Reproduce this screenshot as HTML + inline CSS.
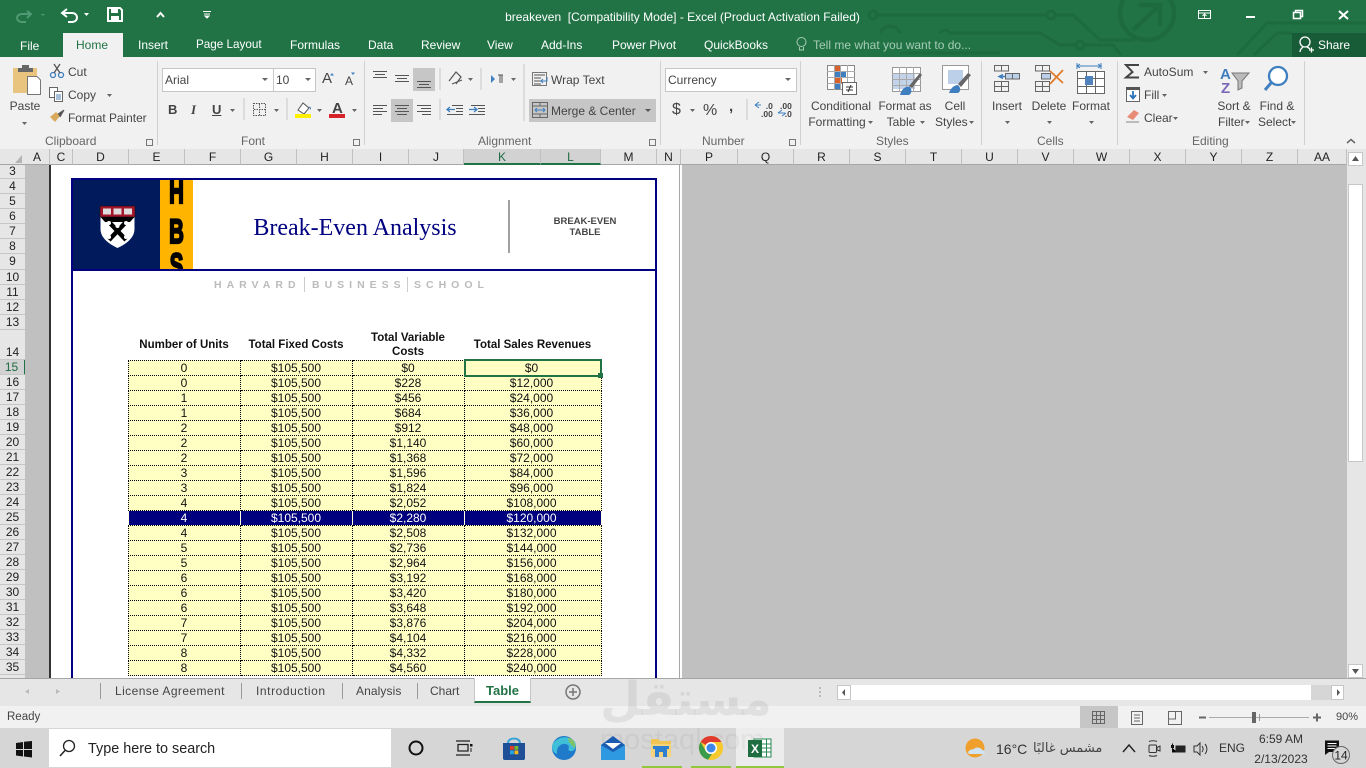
<!DOCTYPE html>
<html><head><meta charset="utf-8"><title>breakeven - Excel</title>
<style>
html,body{margin:0;padding:0;width:1366px;height:768px;overflow:hidden;background:#fff}
body{position:relative;font-family:"Liberation Sans","DejaVu Sans",sans-serif;font-size:12px;color:#444}
.a{position:absolute}
.t{position:absolute;white-space:pre;line-height:14px}
.c{text-align:center}
.w{color:#fff}
.g{color:#666}
.ch{position:absolute;top:149px;line-height:16px;text-align:center;color:#222;background:#e6e6e6;border-right:1px solid #c0c0c0;box-sizing:border-box;border-bottom:1px solid #a6a6a6;height:16px}
.rh{position:absolute;left:0;width:25px;text-align:center;color:#222;background:#e6e6e6;border-bottom:1px solid #c6c6c6;box-sizing:border-box;font-size:12px}
table{position:absolute;left:128px;top:360px;width:473px;border-collapse:collapse;table-layout:fixed;font-size:12px;color:#111;background:#ffffc4}
td{height:14px;padding:0 1px 0 0;border:1px dotted #000;text-align:center;line-height:14px;overflow:hidden}
td:last-child{padding-right:3px}
tr.s td{background:#00007f;color:#fff;border-left-color:#fff;border-right-color:#fff}
.hd{position:absolute;font-weight:bold;font-size:11.500px;color:#111;text-align:center;line-height:14px}
svg{position:absolute;left:0;top:0}
</style></head><body>

<!-- title bar + tabs -->
<div class="a" style="left:0;top:0;width:1366px;height:57px;background:#217346"></div>
<svg width="1366" height="57" style="left:0;top:0">
<g fill="none" stroke="#1d6a3f" stroke-width="3">
<circle cx="1147" cy="13" r="27" stroke-width="4.500"/>
<path d="M1133 30L1159 6M1139 5H1160V26" stroke-width="4.500"/>
<path d="M876 15H1047M1055 15H1073L1100 40H1135"/>
<circle cx="1051" cy="15" r="4"/>
<circle cx="873" cy="15" r="4"/>
<path d="M973 33H1040L1060 45H1076M1084 45H1113L1121 55"/>
<circle cx="1080" cy="45" r="4"/>
<path d="M880 33C884 24 896 24 900 33M940 33C943 29 947 29 950 33M950 33H973"/>
<path d="M1237 55L1267 23H1366M1254 55L1277 33H1292"/>
<path d="M900 53H1000"/>
</g></svg>
<div class="a" style="left:63px;top:33px;width:60px;height:24px;background:#f1f1f1"></div>
<div class="a" style="left:1292px;top:33px;width:74px;height:24px;background:#185c37"></div>
<div class="t w c" style="left:400px;top:10px;width:565px">breakeven  [Compatibility Mode] - Excel (Product Activation Failed)</div>
<div class="t w" style="left:20px;top:39px">File</div>
<div class="t" style="left:76px;top:38px;color:#217346">Home</div>
<div class="t w" style="left:138px;top:38px">Insert</div>
<div class="t w" style="left:196px;top:38px;font-size:11.700px">Page Layout</div>
<div class="t w" style="left:290px;top:38px">Formulas</div>
<div class="t w" style="left:368px;top:38px">Data</div>
<div class="t w" style="left:421px;top:38px">Review</div>
<div class="t w" style="left:487px;top:38px">View</div>
<div class="t w" style="left:541px;top:38px">Add-Ins</div>
<div class="t w" style="left:612px;top:38px">Power Pivot</div>
<div class="t w" style="left:704px;top:38px">QuickBooks</div>
<div class="t" style="left:813px;top:38px;color:#a6cbb5">Tell me what you want to do...</div>
<div class="t w" style="left:1318px;top:38px">Share</div>

<!-- ribbon -->
<div class="a" style="left:0;top:57px;width:1366px;height:92px;background:#f1f1f1"></div>
<div class="a" style="left:157px;top:61px;width:1px;height:84px;background:#d0d0d0"></div>
<div class="a" style="left:364px;top:61px;width:1px;height:84px;background:#d0d0d0"></div>
<div class="a" style="left:660px;top:61px;width:1px;height:84px;background:#d0d0d0"></div>
<div class="a" style="left:800px;top:61px;width:1px;height:84px;background:#d0d0d0"></div>
<div class="a" style="left:981px;top:61px;width:1px;height:84px;background:#d0d0d0"></div>
<div class="a" style="left:1117px;top:61px;width:1px;height:84px;background:#d0d0d0"></div>
<div class="a" style="left:1304px;top:61px;width:1px;height:84px;background:#d0d0d0"></div>
<div class="a" style="left:162px;top:68px;width:110px;height:22px;background:#fff;border:1px solid #c6c6c6"></div>
<div class="a" style="left:273px;top:68px;width:41px;height:22px;background:#fff;border:1px solid #c6c6c6"></div>
<div class="a" style="left:665px;top:68px;width:130px;height:22px;background:#fff;border:1px solid #c6c6c6"></div>
<div class="a" style="left:413px;top:68px;width:22px;height:23px;background:#c6c6c6"></div>
<div class="a" style="left:391px;top:99px;width:22px;height:23px;background:#c6c6c6"></div>
<div class="a" style="left:529px;top:99px;width:127px;height:23px;background:#c6c6c6"></div>

<div class="t" style="left:68px;top:65px">Cut</div>
<div class="t" style="left:68px;top:88px">Copy</div>
<div class="t" style="left:68px;top:111px;font-size:11.900px">Format Painter</div>
<div class="t c" style="left:5px;top:99px;width:40px">Paste</div>
<div class="t g" style="left:45px;top:134px">Clipboard</div>
<div class="t" style="left:165px;top:73px">Arial</div>
<div class="t" style="left:276px;top:73px">10</div>
<div class="t g" style="left:241px;top:134px">Font</div>
<div class="t" style="left:551px;top:73px">Wrap Text</div>
<div class="t" style="left:551px;top:104px">Merge &amp; Center</div>
<div class="t g" style="left:478px;top:134px">Alignment</div>
<div class="t" style="left:668px;top:73px">Currency</div>
<div class="t" style="left:672px;top:103px;font-size:16px">$</div>
<div class="t" style="left:703px;top:104px;font-size:16px">%</div>
<div class="t" style="left:729px;top:100px;font-size:15px;font-weight:bold">,</div>
<div class="t" style="left:761px;top:102px;font-size:8.500px;line-height:8px;font-weight:bold">  .0<br>.00</div>
<div class="t" style="left:780px;top:102px;font-size:8.500px;line-height:8px;font-weight:bold">.00<br>  .0</div>
<div class="t g" style="left:702px;top:134px">Number</div>
<div class="t c" style="left:805px;top:99px;width:72px">Conditional</div>
<div class="t c" style="left:805px;top:115px;width:64px">Formatting</div>
<div class="t c" style="left:875px;top:99px;width:60px;font-size:11.800px">Format as</div>
<div class="t c" style="left:875px;top:115px;width:52px">Table</div>
<div class="t c" style="left:935px;top:99px;width:40px">Cell</div>
<div class="t c" style="left:935px;top:115px;width:32px">Styles</div>
<div class="t g" style="left:876px;top:134px">Styles</div>
<div class="t c" style="left:986px;top:99px;width:42px">Insert</div>
<div class="t c" style="left:1028px;top:99px;width:42px">Delete</div>
<div class="t c" style="left:1070px;top:99px;width:42px">Format</div>
<div class="t g" style="left:1037px;top:134px">Cells</div>
<div class="t" style="left:1144px;top:65px">AutoSum</div>
<div class="t" style="left:1144px;top:88px">Fill</div>
<div class="t" style="left:1144px;top:111px">Clear</div>
<div class="t c" style="left:1214px;top:99px;width:40px">Sort &amp;</div>
<div class="t" style="left:1218px;top:115px">Filter</div>
<div class="t c" style="left:1256px;top:99px;width:42px">Find &amp;</div>
<div class="t" style="left:1258px;top:115px">Select</div>
<div class="t g" style="left:1192px;top:134px">Editing</div>
<div class="t" style="left:322px;top:72px;font-size:15px">A</div>
<div class="t" style="left:345px;top:74px;font-size:12px">A</div>
<div class="t" style="left:168px;top:103px;font-weight:bold;font-size:13px">B</div>
<div class="t" style="left:191px;top:103px;font-style:italic;font-size:13px;font-family:'Liberation Serif',serif;font-weight:bold">I</div>
<div class="t" style="left:212px;top:103px;font-size:13px;font-weight:bold;text-decoration:underline">U</div>
<div class="t" style="left:332px;top:102px;font-size:15px;font-weight:bold">A</div>

<!-- column headers -->
<div class="a" style="left:0;top:149px;width:1347px;height:16px;background:#e6e6e6;border-bottom:1px solid #a6a6a6;box-sizing:border-box"></div>
<div class="ch" style="left:25px;width:25px">A</div>
<div class="ch" style="left:50px;width:23px">C</div>
<div class="ch" style="left:73px;width:56px">D</div>
<div class="ch" style="left:129px;width:56px">E</div>
<div class="ch" style="left:185px;width:56px">F</div>
<div class="ch" style="left:241px;width:56px">G</div>
<div class="ch" style="left:297px;width:56px">H</div>
<div class="ch" style="left:353px;width:56px">I</div>
<div class="ch" style="left:409px;width:55px">J</div>
<div class="ch" style="left:464px;width:77px;background:#d2d2d2;color:#1e6b41;border-bottom:2px solid #217346">K</div>
<div class="ch" style="left:541px;width:60px;background:#d2d2d2;color:#1e6b41;border-bottom:2px solid #217346">L</div>
<div class="ch" style="left:601px;width:56px">M</div>
<div class="ch" style="left:657px;width:24px">N</div>
<div class="ch" style="left:681px;width:57px">P</div>
<div class="ch" style="left:738px;width:56px">Q</div>
<div class="ch" style="left:794px;width:56px">R</div>
<div class="ch" style="left:850px;width:56px">S</div>
<div class="ch" style="left:906px;width:56px">T</div>
<div class="ch" style="left:962px;width:56px">U</div>
<div class="ch" style="left:1018px;width:56px">V</div>
<div class="ch" style="left:1074px;width:56px">W</div>
<div class="ch" style="left:1130px;width:56px">X</div>
<div class="ch" style="left:1186px;width:56px">Y</div>
<div class="ch" style="left:1242px;width:56px">Z</div>
<div class="ch" style="left:1298px;width:49px">AA</div>

<!-- row headers -->
<div class="rh" style="top:165px;height:14px;line-height:13px">3</div>
<div class="rh" style="top:179px;height:15px;line-height:15px">4</div>
<div class="rh" style="top:194px;height:15px;line-height:15px">5</div>
<div class="rh" style="top:209px;height:15px;line-height:15px">6</div>
<div class="rh" style="top:224px;height:15px;line-height:15px">7</div>
<div class="rh" style="top:239px;height:15px;line-height:15px">8</div>
<div class="rh" style="top:254px;height:16px;line-height:15px">9</div>
<div class="rh" style="top:270px;height:15px;line-height:15px">10</div>
<div class="rh" style="top:285px;height:15px;line-height:15px">11</div>
<div class="rh" style="top:300px;height:15px;line-height:15px">12</div>
<div class="rh" style="top:315px;height:15px;line-height:15px">13</div>
<div class="rh" style="top:330px;height:30px;line-height:44px">14</div>
<div class="rh" style="top:360px;height:15px;line-height:15px;width:26px;padding-right:1px;background:#d2d2d2;color:#1e6b41;border-right:2px solid #217346">15</div>
<div class="rh" style="top:375px;height:15px;line-height:15px">16</div>
<div class="rh" style="top:390px;height:15px;line-height:15px">17</div>
<div class="rh" style="top:405px;height:15px;line-height:15px">18</div>
<div class="rh" style="top:420px;height:15px;line-height:15px">19</div>
<div class="rh" style="top:435px;height:15px;line-height:15px">20</div>
<div class="rh" style="top:450px;height:15px;line-height:15px">21</div>
<div class="rh" style="top:465px;height:15px;line-height:15px">22</div>
<div class="rh" style="top:480px;height:15px;line-height:15px">23</div>
<div class="rh" style="top:495px;height:15px;line-height:15px">24</div>
<div class="rh" style="top:510px;height:15px;line-height:15px">25</div>
<div class="rh" style="top:525px;height:15px;line-height:15px">26</div>
<div class="rh" style="top:540px;height:15px;line-height:15px">27</div>
<div class="rh" style="top:555px;height:15px;line-height:15px">28</div>
<div class="rh" style="top:570px;height:15px;line-height:15px">29</div>
<div class="rh" style="top:585px;height:15px;line-height:15px">30</div>
<div class="rh" style="top:600px;height:15px;line-height:15px">31</div>
<div class="rh" style="top:615px;height:15px;line-height:15px">32</div>
<div class="rh" style="top:630px;height:15px;line-height:15px">33</div>
<div class="rh" style="top:645px;height:15px;line-height:15px">34</div>
<div class="rh" style="top:660px;height:15px;line-height:15px">35</div>
<div class="a" style="left:0;top:675px;width:25px;height:3px;background:#e6e6e6"></div>

<!-- sheet -->
<div class="a" style="left:25px;top:165px;width:25px;height:513px;background:#c0c0c0"></div>
<div class="a" style="left:49px;top:165px;width:2px;height:513px;background:#333"></div>
<div class="a" style="left:25px;top:360px;width:1px;height:0"></div>
<div class="a" style="left:679px;top:165px;width:1px;height:513px;background:#a6a6a6"></div>
<div class="a" style="left:682px;top:165px;width:665px;height:513px;background:#c0c0c0"></div>

<div class="a" style="left:71px;top:178px;width:582px;height:500px;border:2px solid #000080;border-bottom:0"></div>
<div class="a" style="left:73px;top:269px;width:582px;height:2px;background:#000080"></div>
<div class="a" style="left:73px;top:180px;width:87px;height:89px;background:#001a5c"></div>
<div class="a" style="left:160px;top:180px;width:33px;height:89px;background:#ffb400"></div>
<div class="a" style="left:508px;top:200px;width:2px;height:53px;background:#a0a0a0"></div>

<svg width="1366" height="768">
<defs><clipPath id="hb"><rect x="160" y="180" width="33" height="89"/></clipPath></defs>
<g clip-path="url(#hb)" font-family="Liberation Sans" font-weight="bold" font-size="34" fill="#000" stroke="#000" stroke-width="2.200" text-anchor="middle">
<text transform="translate(176.500 203) scale(.6 1)">H</text>
<text transform="translate(176.500 243) scale(.6 1)">B</text>
<text transform="translate(176.500 277) scale(.6 1)">S</text>
</g>
<!-- shield -->
<rect x="100" y="206" width="35" height="11" fill="#a3162b" stroke="#111" stroke-width=".6"/>
<rect x="103" y="208.500" width="8" height="6" fill="#ddd"/><rect x="113.500" y="208.500" width="8" height="6" fill="#ddd"/><rect x="124" y="208.500" width="8" height="6" fill="#ddd"/>
<path d="M100.500 217H134.500V229C134.500 238 126 244 117.500 248C109 244 100.500 238 100.500 229Z" fill="#fff"/>
<path d="M100.500 217H134.500L130 222H105Z" fill="#000"/>
<path d="M109 222L126 240M126 222L109 240" stroke="#000" stroke-width="4.500" fill="none"/>
<g fill="#fff"><circle cx="109" cy="223" r="2"/><circle cx="126" cy="223" r="2"/><circle cx="117.500" cy="226" r="2"/><circle cx="109" cy="237" r="2"/><circle cx="126" cy="237" r="2"/><circle cx="117.500" cy="238" r="2"/></g>
</svg>

<div class="t c" style="left:190px;top:212px;width:330px;font-family:'Liberation Serif',serif;font-size:24px;line-height:32px;color:#000080">Break-Even Analysis</div>
<div class="hd" style="left:530px;top:216px;width:110px;font-size:9.500px;line-height:11px;color:#444">BREAK-EVEN<br>TABLE</div>
<div class="t" style="left:214px;top:278px;font-size:10.500px;font-weight:bold;color:#bbb;letter-spacing:5px">HARVARD</div>
<div class="a" style="left:304px;top:277px;width:1px;height:15px;background:#ccc"></div>
<div class="t" style="left:312px;top:278px;font-size:10.500px;font-weight:bold;color:#bbb;letter-spacing:5px">BUSINESS</div>
<div class="a" style="left:407px;top:277px;width:1px;height:15px;background:#ccc"></div>
<div class="t" style="left:414px;top:278px;font-size:10.500px;font-weight:bold;color:#bbb;letter-spacing:5px">SCHOOL</div>

<div class="hd" style="left:128px;top:338px;width:112px">Number of Units</div>
<div class="hd" style="left:240px;top:338px;width:112px">Total Fixed Costs</div>
<div class="hd" style="left:352px;top:331px;width:112px">Total Variable<br>Costs</div>
<div class="hd" style="left:464px;top:338px;width:137px">Total Sales Revenues</div>

<table><colgroup><col style="width:112px"><col style="width:112px"><col style="width:112px"><col style="width:137px"></colgroup>
<tr><td>0</td><td>$105,500</td><td>$0</td><td>$0</td></tr>
<tr><td>0</td><td>$105,500</td><td>$228</td><td>$12,000</td></tr>
<tr><td>1</td><td>$105,500</td><td>$456</td><td>$24,000</td></tr>
<tr><td>1</td><td>$105,500</td><td>$684</td><td>$36,000</td></tr>
<tr><td>2</td><td>$105,500</td><td>$912</td><td>$48,000</td></tr>
<tr><td>2</td><td>$105,500</td><td>$1,140</td><td>$60,000</td></tr>
<tr><td>2</td><td>$105,500</td><td>$1,368</td><td>$72,000</td></tr>
<tr><td>3</td><td>$105,500</td><td>$1,596</td><td>$84,000</td></tr>
<tr><td>3</td><td>$105,500</td><td>$1,824</td><td>$96,000</td></tr>
<tr><td>4</td><td>$105,500</td><td>$2,052</td><td>$108,000</td></tr>
<tr class="s"><td>4</td><td>$105,500</td><td>$2,280</td><td>$120,000</td></tr>
<tr><td>4</td><td>$105,500</td><td>$2,508</td><td>$132,000</td></tr>
<tr><td>5</td><td>$105,500</td><td>$2,736</td><td>$144,000</td></tr>
<tr><td>5</td><td>$105,500</td><td>$2,964</td><td>$156,000</td></tr>
<tr><td>6</td><td>$105,500</td><td>$3,192</td><td>$168,000</td></tr>
<tr><td>6</td><td>$105,500</td><td>$3,420</td><td>$180,000</td></tr>
<tr><td>6</td><td>$105,500</td><td>$3,648</td><td>$192,000</td></tr>
<tr><td>7</td><td>$105,500</td><td>$3,876</td><td>$204,000</td></tr>
<tr><td>7</td><td>$105,500</td><td>$4,104</td><td>$216,000</td></tr>
<tr><td>8</td><td>$105,500</td><td>$4,332</td><td>$228,000</td></tr>
<tr><td>8</td><td>$105,500</td><td>$4,560</td><td>$240,000</td></tr>
</table>
<div class="a" style="left:464px;top:359px;width:134px;height:14px;border:2px solid #217346"></div>
<div class="a" style="left:598px;top:373px;width:5px;height:5px;background:#217346;border:0"></div>

<!-- vertical scrollbar -->
<div class="a" style="left:1347px;top:149px;width:19px;height:529px;background:#e6e6e6"></div>
<div class="a" style="left:1348px;top:152px;width:15px;height:14px;background:#fff;border:1px solid #c6c6c6;box-sizing:border-box"></div>
<div class="a" style="left:1348px;top:184px;width:15px;height:278px;background:#fff;border:1px solid #c6c6c6;box-sizing:border-box"></div>
<div class="a" style="left:1348px;top:664px;width:15px;height:14px;background:#fff;border:1px solid #c6c6c6;box-sizing:border-box"></div>

<!-- tab bar -->
<div class="a" style="left:0;top:678px;width:1366px;height:27px;background:#e6e6e6;border-top:1px solid #a6a6a6;border-bottom:1px solid #c6c6c6"></div>
<div class="a" style="left:474px;top:678px;width:57px;height:25px;background:#fff;border-bottom:2px solid #217346;border-left:1px solid #c6c6c6;border-right:1px solid #c6c6c6;box-sizing:border-box"></div>
<div class="a" style="left:100px;top:683px;width:1px;height:16px;background:#9a9a9a"></div>
<div class="a" style="left:241px;top:683px;width:1px;height:16px;background:#9a9a9a"></div>
<div class="a" style="left:342px;top:683px;width:1px;height:16px;background:#9a9a9a"></div>
<div class="a" style="left:417px;top:683px;width:1px;height:16px;background:#9a9a9a"></div>
<div class="t" style="left:115px;top:684px;letter-spacing:.42px">License Agreement</div>
<div class="t" style="left:256px;top:684px;letter-spacing:.58px">Introduction</div>
<div class="t" style="left:356px;top:684px;letter-spacing:.1px">Analysis</div>
<div class="t" style="left:430px;top:684px">Chart</div>
<div class="t" style="left:486px;top:684px;font-weight:bold;font-size:13px;color:#217346">Table</div>
<div class="a" style="left:837px;top:685px;width:507px;height:15px;background:#d6d6d6"></div>
<div class="a" style="left:837px;top:685px;width:14px;height:15px;background:#fff;border:1px solid #c6c6c6;box-sizing:border-box"></div>
<div class="a" style="left:851px;top:685px;width:460px;height:15px;background:#fff"></div>
<div class="a" style="left:1331px;top:685px;width:13px;height:15px;background:#fff;border:1px solid #c6c6c6;box-sizing:border-box"></div>

<!-- status bar -->
<div class="a" style="left:0;top:706px;width:1366px;height:22px;background:#f1f1f1"></div>
<div class="a" style="left:1080px;top:706px;width:38px;height:22px;background:#c6c6c6"></div>
<div class="t" style="left:7px;top:710px;font-size:11.500px">Ready</div>
<div class="t" style="left:1336px;top:710px;font-size:11px">90%</div>

<!-- taskbar -->
<div class="a" style="left:0;top:728px;width:1366px;height:40px;background:#d6d6d6"></div>
<div class="a" style="left:49px;top:729px;width:342px;height:38px;background:#fff"></div>
<div class="a" style="left:736px;top:728px;width:48px;height:40px;background:#ececec"></div>
<div class="a" style="left:642px;top:766px;width:40px;height:2px;background:#92c83e"></div>
<div class="a" style="left:691px;top:766px;width:40px;height:2px;background:#92c83e"></div>
<div class="a" style="left:736px;top:766px;width:48px;height:2px;background:#92c83e"></div>
<div class="t" style="left:88px;top:741px;font-size:14.400px;line-height:16px;color:#222">Type here to search</div>
<div class="t" style="left:996px;top:741px;font-size:14px;line-height:16px;color:#333">16°C</div>
<div class="t" style="left:1033px;top:741px;font-size:13px;line-height:16px;color:#444;font-family:'DejaVu Sans',sans-serif" dir="rtl">مشمس غالبًا</div>
<div class="t" style="left:1219px;top:741px;font-size:12px;line-height:14px;color:#333">ENG</div>
<div class="t c" style="left:1250px;top:732px;width:62px;font-size:12px;color:#333">6:59 AM</div>
<div class="t c" style="left:1250px;top:752px;width:62px;font-size:12px;color:#333">2/13/2023</div>

<!-- watermark -->
<div class="t" style="left:600px;top:665px;font-family:'DejaVu Sans',sans-serif;font-size:47px;line-height:70px;font-weight:bold;color:rgba(0,0,0,.065)">مستقل</div>
<div class="t" style="left:600px;top:725px;font-size:29px;line-height:30px;color:rgba(0,0,0,.045)">mostaql.com</div>

<!-- icons -->
<svg width="1366" height="768">
<!-- qat -->
<path d="M31 14H22C19 14 17 16 17 18S19 22 22 22H26" fill="none" stroke="#4f9a72" stroke-width="2"/><path d="M27 11L31 14L27 18" fill="none" stroke="#4f9a72" stroke-width="2"/>
<path d="M41 14h4l-2 2z" fill="#4f9a72"/>
<path d="M63 13H72C75 13 77 15 77 17.500S75 22 72 22H68" fill="none" stroke="#fff" stroke-width="2"/><path d="M67 9L62 13L67 17" fill="none" stroke="#fff" stroke-width="2"/>
<path d="M84 13h5l-2.500 3z" fill="#fff"/>
<path d="M108 8H120L122 10V21H108Z" fill="none" stroke="#fff" stroke-width="2"/><rect x="111" y="8" width="7" height="5" fill="#fff"/><rect x="111" y="16" width="8" height="5" fill="#fff"/>
<path d="M157 17L160.500 13L164 17" fill="none" stroke="#fff" stroke-width="2"/>
<path d="M203 11.500h8M204 14h6M205 16l2 2 2-2z" stroke="#fff" stroke-width="1" fill="#fff"/>
<!-- window buttons -->
<rect x="1198.500" y="10.500" width="12" height="8" fill="none" stroke="#fff"/><path d="M1198.500 13H1211M1204.500 18V14.500M1202.500 16L1204.500 14L1206.500 16" stroke="#fff" fill="none"/>
<rect x="1246" y="16" width="9" height="2" fill="#fff"/>
<path d="M1293.500 12.500V18.500H1300.500V12.500ZM1295.500 12V10.500H1302.500V16.500H1301" fill="none" stroke="#fff" stroke-width="1.500"/>
<path d="M1339 11L1348 19M1348 11L1339 19" stroke="#fff" stroke-width="2"/>
<circle cx="1305" cy="42" r="5" fill="none" stroke="#fff" stroke-width="1.300"/><path d="M1300 52C1300 49 1302 48 1303 47M1307 47C1308 47.500 1309 48 1310 49M1309 50H1314M1311.500 47.500V52.500" fill="none" stroke="#fff" stroke-width="1.300"/>
<circle cx="801.500" cy="42" r="4.500" fill="none" stroke="#a6cbb5"/><path d="M799.500 47V50H803.500V47" fill="none" stroke="#a6cbb5"/>
<!-- paste -->
<rect x="13" y="68" width="24" height="25" fill="#e9c47f"/><rect x="18" y="68" width="15" height="4" fill="#666"/><rect x="22" y="65" width="7" height="4" fill="#666"/>
<path d="M27.500 76.500H37L40.500 80V94.500H27.500Z" fill="#fff" stroke="#777"/>
<path d="M22 122h5l-2.500 3z" fill="#666"/>
<!-- cut copy painter -->
<circle cx="53" cy="75" r="2.500" fill="none" stroke="#3f7fbf" stroke-width="1.300"/><circle cx="61" cy="75" r="2.500" fill="none" stroke="#3f7fbf" stroke-width="1.300"/><path d="M54 73L60 64M60 73L54 64" stroke="#555" stroke-width="1.300"/>
<rect x="49.500" y="87.500" width="8" height="10" fill="#fff" stroke="#666"/><rect x="54.500" y="91.500" width="8" height="10" fill="#fff" stroke="#666"/><path d="M56 95h5M56 97h5M56 99h5" stroke="#4f7fb5"/>
<path d="M107 94h5l-2.500 3z" fill="#666"/>
<path d="M50 117L55 122L60 116L56 112Z" fill="#d9a95c"/><path d="M58 114L64 110L60 117" fill="#555" stroke="#555"/>
<path d="M262 78h6l-3 3zM305 78h6l-3 3z" fill="#666"/>
<path d="M332 73l2 2.500h-4zM353 75l2-2.500h-4z" fill="#3f7fbf"/>
<path d="M230 109h5l-2.500 3z" fill="#666"/>
<path d="M244 98V120" stroke="#c6c6c6"/><path d="M287 98V120" stroke="#c6c6c6"/>
<rect x="253.500" y="103.500" width="12" height="12" fill="none" stroke="#555" stroke-dasharray="1.500 1"/><path d="M259.500 104V115M254 109.500H265" stroke="#555" stroke-dasharray="1.500 1"/>
<path d="M274 109h5l-2.500 3z" fill="#666"/>
<path d="M298 110L303 103L309 108L304 114Z" fill="#fff" stroke="#555"/><path d="M309 107c2-1 2 2 2 3z" fill="#3f7fbf"/><rect x="295" y="114" width="16" height="4" fill="#ffef00"/>
<path d="M317 109h5l-2.500 3z" fill="#666"/>
<rect x="329" y="114" width="16" height="4" fill="#d8222a"/>
<path d="M352 109h5l-2.500 3z" fill="#666"/>
<!-- align -->
<g stroke="#555"><path d="M373 71.500H387M375 74.500H385M373 77.500H387"/><path d="M395 75.500H409M397 78.500H407M395 81.500H409"/><path d="M417 81.500H431M419 84.500H429M417 87.500H431"/>
<path d="M373 105.500H387M373 108.500H383M373 111.500H387M373 114.500H382"/><path d="M395 105.500H409M397 108.500H407M395 111.500H409M397 114.500H407"/><path d="M417 105.500H431M421 108.500H431M417 111.500H431M422 114.500H431"/>
<path d="M452 105.500H463M456 108.500H463M456 111.500H463M447 114.500H463"/><path d="M471 105.500H485M478 108.500H485M478 111.500H485M469 114.500H485"/>
<path d="M440 68V90" stroke="#c6c6c6"/><path d="M481 68V90" stroke="#c6c6c6"/><path d="M524 64V121" stroke="#c6c6c6"/><path d="M440 99V120" stroke="#c6c6c6"/></g>
<path d="M447 109.500H455M450 107L447 109.500L450 112" stroke="#3f7fbf" fill="none" stroke-width="1.300"/>
<path d="M469 109.500H477M474 107L477 109.500L474 112" stroke="#3f7fbf" fill="none" stroke-width="1.300"/>
<path d="M449 81L456 72L461 77L456 84" fill="none" stroke="#555" stroke-width="1.200"/><path d="M452 84L462 80" stroke="#555"/>
<path d="M468 78h5l-2.500 3zM511 78h5l-2.500 3z" fill="#666"/>
<path d="M491 75L495 79L491 83Z" fill="#3f7fbf"/><path d="M498 75H503M500 75V83M502 75V83" stroke="#555"/>
<rect x="532.500" y="72.500" width="14" height="13" fill="none" stroke="#777"/><path d="M534 75H545M534 78H541M534 81H541M534 84H541" stroke="#555"/><path d="M541 81H547V77M543 79L541 81L543 83" fill="none" stroke="#3f7fbf"/>
<rect x="532.500" y="102.500" width="15" height="15" fill="none" stroke="#666"/><path d="M533 106H547M533 114H547M540 102V106M540 114V118" stroke="#666"/><path d="M535 110H545M537 108L535 110L537 112M543 108L545 110L543 112" fill="none" stroke="#3f7fbf"/>
<path d="M645 109h6l-3 3z" fill="#555"/>
<path d="M785 78h6l-3 3z" fill="#666"/>
<path d="M690 109h5l-2.500 3z" fill="#666"/>
<path d="M747 99V120" stroke="#c6c6c6"/>
<path d="M755 105L759 102M755 105L759 108M755 105H761" stroke="#3f7fbf" fill="none"/>
<path d="M778 113L782 110M786 113L782 116M778 113H785" stroke="#3f7fbf" fill="none"/>
<!-- dialog launchers -->
<g fill="none" stroke="#777"><rect x="146.500" y="139.500" width="6" height="6"/><rect x="353.500" y="139.500" width="6" height="6"/><rect x="649.500" y="139.500" width="6" height="6"/><rect x="789.500" y="139.500" width="6" height="6"/></g>
<!-- conditional -->
<g stroke="#888" fill="#fff"><rect x="827.500" y="65.500" width="27" height="24"/></g>
<rect x="835" y="66" width="5" height="5" fill="#d9622b"/><rect x="835" y="72" width="11" height="5" fill="#3f7fbf"/><rect x="835" y="78" width="7" height="5" fill="#d9622b"/><rect x="835" y="84" width="5" height="5" fill="#3f7fbf"/>
<path d="M834.500 65V90M840.500 65V90M847.500 65V90M827 71.500H855M827 77.500H855M827 83.500H855" stroke="#aaa"/>
<rect x="842.500" y="82.500" width="14" height="12" fill="#fff" stroke="#666"/><path d="M846 87H853M846 90H853M851 85L848 92" stroke="#333"/>
<path d="M868 121h5l-2.500 3z" fill="#666"/>
<!-- format table -->
<rect x="892.500" y="67.500" width="28" height="24" fill="#fff" stroke="#999"/><rect x="893" y="73" width="22" height="16" fill="#c3d3ea"/><path d="M899.500 67V92M906.500 67V92M913.500 67V92M892 73.500H921M892 79.500H921M892 85.500H921" stroke="#aaa"/>
<path d="M900 95C902 88 906 86 910 87C912 90 912 93 909 95Z" fill="#3f7fbf"/><path d="M909 86L920 73L922 75L912 88Z" fill="#666"/>
<path d="M920 121h5l-2.500 3z" fill="#666"/>
<rect x="942.500" y="65.500" width="26" height="24" fill="#fff" stroke="#999"/><rect x="948" y="70" width="15" height="14" fill="#bcd0ea"/>
<path d="M949 93C951 87 955 85 958 85C961 88 961 91 958 93Z" fill="#3f7fbf"/><path d="M958 84L968 73L971 75L961 87Z" fill="#666"/>
<path d="M969 121h5l-2.500 3z" fill="#666"/>
<!-- cells -->
<g fill="none" stroke="#666"><rect x="994.500" y="65.500" width="14" height="5.500"/><path d="M1001.500 65V71"/><rect x="994.500" y="81.500" width="14" height="10"/><path d="M1001.500 81V92M994 86.500H1009"/><rect x="1005.500" y="73.500" width="14" height="5.500" fill="#bcd0ea"/><path d="M1012.500 73V79"/>
<rect x="1035.500" y="65.500" width="14" height="5.500"/><path d="M1042.500 65V71"/><rect x="1035.500" y="81.500" width="14" height="10"/><path d="M1042.500 81V92M1035 86.500H1050"/><rect x="1041.500" y="73.500" width="9" height="5.500" fill="#bcd0ea"/>
<rect x="1077.500" y="71.500" width="27" height="22" fill="#fff"/><path d="M1077 78.500H1105M1077 86.500H1105M1086.500 71V94M1095.500 71V94"/></g>
<path d="M1003 74.500L999 76.500L1003 78.500M999 76.500H1005" stroke="#3f7fbf" fill="none" stroke-width="1.500"/>
<path d="M1050 71L1063 83M1063 70L1050 84" stroke="#e07b2a" stroke-width="1.800"/>
<path d="M1078 66H1100M1080 64L1077 66L1080 68M1098 64L1101 66L1098 68M1077 63V69M1101 63V69" stroke="#3f7fbf" fill="none"/>
<rect x="1085" y="76" width="8" height="9" fill="#4f81bd"/>
<path d="M1005 121h5l-2.500 3zM1047 121h5l-2.500 3zM1089 121h5l-2.500 3z" fill="#666"/>
<!-- editing -->
<path d="M1139 65H1126L1132.500 72L1126 77.500H1139" fill="none" stroke="#444" stroke-width="2"/>
<path d="M1203 71h5l-2.500 3zM1162 94h5l-2.500 3zM1173 117h5l-2.500 3z" fill="#666"/>
<rect x="1126.500" y="87.500" width="13" height="14" fill="#fff" stroke="#666"/><rect x="1126" y="87" width="14" height="3" fill="#555"/><path d="M1133 91V98M1130 95L1133 98.500L1136 95" stroke="#2f73b8" stroke-width="1.800" fill="none"/>
<path d="M1127 117L1134 110L1139 113L1133 120Z" fill="#e88c77"/><path d="M1126 122H1139" stroke="#888"/>
<text x="1220" y="79" font-family="Liberation Sans" font-size="15" font-weight="bold" fill="#3f7fbf">A</text>
<text x="1221" y="93" font-family="Liberation Sans" font-size="15" font-weight="bold" fill="#7b68b8">Z</text>
<path d="M1232 73H1249L1242 81V88L1238 90V81Z" fill="#bbb" stroke="#777"/>
<circle cx="1278" cy="76" r="9" fill="#fff" stroke="#3f7fbf" stroke-width="2.300"/><path d="M1271 83L1265 90" stroke="#3f7fbf" stroke-width="3"/>
<path d="M1245 121h5l-2.500 3zM1291 121h5l-2.500 3z" fill="#666"/>
<path d="M1347 143L1351 139.500L1355 143" fill="none" stroke="#666" stroke-width="1.500"/>
<path d="M15 163L22 155V163Z" fill="#b4b4b4"/>
<path d="M1352 161L1355.500 156L1359 161Z" fill="#555"/><path d="M1352 669L1355.500 674L1359 669Z" fill="#555"/>
<path d="M29 689L25 691.500L29 694Z" fill="#bbb"/><path d="M56 689L60 691.500L56 694Z" fill="#bbb"/>
<circle cx="573" cy="692" r="7" fill="none" stroke="#777" stroke-width="1.500"/><path d="M569 692H577M573 688V696" stroke="#777" stroke-width="1.500"/>
<path d="M820 687v2M820 691v2M820 695v2" stroke="#aaa" stroke-width="1.500"/>
<path d="M845 689L842 692.500L845 696Z" fill="#555"/><path d="M1337 689L1340 692.500L1337 696Z" fill="#555"/>
<!-- status icons -->
<g fill="none" stroke="#666"><rect x="1092.500" y="711.500" width="12" height="12"/><path d="M1096.500 711V724M1100.500 711V724M1092 715.500H1105M1092 719.500H1105"/>
<rect x="1131.500" y="711.500" width="11" height="13"/><path d="M1134 715H1140M1134 718H1140M1134 721H1140"/>
<rect x="1168.500" y="711.500" width="13" height="13"/><path d="M1175.500 711V719H1168"/>
<path d="M1209 717.500H1309" stroke="#aaa"/></g>
<rect x="1199" y="716.500" width="7" height="2" fill="#666"/><path d="M1313 717.500H1321M1317 713.500V721.500" stroke="#666" stroke-width="2"/>
<rect x="1252" y="712" width="4" height="11" fill="#666"/><path d="M1259.500 714V721" stroke="#999"/>
<!-- taskbar icons -->
<g fill="#111"><path d="M16 743L23 742V749H16ZM24 741.800L32 741V749H24ZM16 750H23V756.500L16 755.500ZM24 750H32V757.500L24 756.500Z"/></g>
<circle cx="69" cy="746" r="5.500" fill="none" stroke="#222" stroke-width="1.300"/><path d="M65 750.500L60 756" stroke="#222" stroke-width="1.500"/>
<circle cx="416" cy="748" r="6.500" fill="none" stroke="#111" stroke-width="2"/>
<path d="M456 741H470M456 755H470M458 744.500H468V751H458Z" fill="none" stroke="#222" stroke-width="1.300"/><rect x="470" y="744" width="2.500" height="2.500" fill="#111"/><path d="M471 748V752" stroke="#222"/>
<path d="M503 743H525V758C525 760 524 760 522 760H506C504 760 503 760 503 758Z" fill="#1f4f96"/><path d="M508 743C508 737 520 737 520 743" fill="none" stroke="#35a4d8" stroke-width="2"/>
<rect x="510" y="746" width="3.800" height="3.800" fill="#e83c2a"/><rect x="514.500" y="746" width="3.800" height="3.800" fill="#78b82a"/><rect x="510" y="750.500" width="3.800" height="3.800" fill="#25a7e0"/><rect x="514.500" y="750.500" width="3.800" height="3.800" fill="#f9b81c"/>
<circle cx="564" cy="748" r="12" fill="#1f7ac9"/><path d="M552 746C554 738 568 733 575 742C577 746 575 752 570 751C566 750 572 746 566 744C560 743 556 748 557 754C554 753 552 750 552 746Z" fill="#3fc0d8"/><path d="M568 738C573 738 576 743 575 748C571 745 568 742 568 738Z" fill="#7ec36a"/>
<rect x="601" y="745" width="24" height="15" fill="#2e98e0"/><path d="M601 745L613 736L625 745L613 752Z" fill="#1b5cb0"/><path d="M605 743H621L613 749Z" fill="#fff"/>
<path d="M651 739H658L660 741H671V757H651Z" fill="#f1c453"/><rect x="651" y="744" width="20" height="13" fill="#f5d27b"/><path d="M655 757V749H667V757H663V752H659V757Z" fill="#2e7fd0"/><rect x="653" y="746" width="16" height="3" fill="#2e7fd0"/>
<circle cx="711" cy="748" r="12" fill="#f6c92c"/><path d="M711 736A12 12 0 0 1 721.400 742H711A6 6 0 0 0 705.800 745L700.600 742A12 12 0 0 1 711 736Z" fill="#df3b2e"/><path d="M700.600 742L705.800 751A6 6 0 0 0 712 754L708 759.700A12 12 0 0 1 700.600 742Z" fill="#3a9b4a"/><circle cx="711" cy="748" r="6" fill="#fff"/><circle cx="711" cy="748" r="4.500" fill="#3e86e8"/>
<rect x="754" y="739" width="17" height="18" fill="#fff" stroke="#2a8a55"/><path d="M762 744H771M762 748H771M762 752H771M766.500 739V757" stroke="#2a8a55"/>
<rect x="748" y="740" width="14" height="17" fill="#1e6e41"/>
<text x="751" y="753" font-family="Liberation Sans" font-size="12" font-weight="bold" fill="#fff">X</text>
<!-- tray -->
<circle cx="975" cy="748" r="9.500" fill="#efa02c"/><path d="M969 754C966 751 972 749 974 749C976 746 982 748 982 750C986 750 986 754 983 754Z" fill="#cfe3f2"/>
<path d="M1123 752L1129 745L1135 752" fill="none" stroke="#222" stroke-width="1.400"/>
<rect x="1149" y="745" width="7.500" height="7.500" rx="1" fill="none" stroke="#333"/><path d="M1157 747.500L1160 746V751L1157 750ZM1149 741.500C1151 740.500 1155 740.500 1157 741.500M1149 755.500C1151 756.500 1155 756.500 1157 755.500" fill="none" stroke="#333"/>
<rect x="1171" y="745" width="3" height="3" fill="#111"/><path d="M1172.500 743.500V745M1172.500 748V752H1177" stroke="#111"/><rect x="1176" y="746" width="9" height="6" fill="#222" stroke="#222"/>
<path d="M1194 746H1197L1200 743V755L1197 752H1194Z" fill="none" stroke="#333"/><path d="M1202 746C1203.500 748 1203.500 750 1202 752M1205 744C1207.500 747 1207.500 751 1205 754" fill="none" stroke="#333"/>
<path d="M1325 740.500H1339V752H1329L1325 755Z" fill="#111"/><path d="M1327.500 743.500H1336.500M1327.500 746H1336.500M1327.500 748.500H1336.500" stroke="#fff"/>
<circle cx="1341" cy="755" r="8.500" fill="#d6d6d6" stroke="#666"/>
<text x="1341" y="759.500" font-family="Liberation Sans" font-size="12" fill="#222" text-anchor="middle">14</text>
</svg>
</body></html>
